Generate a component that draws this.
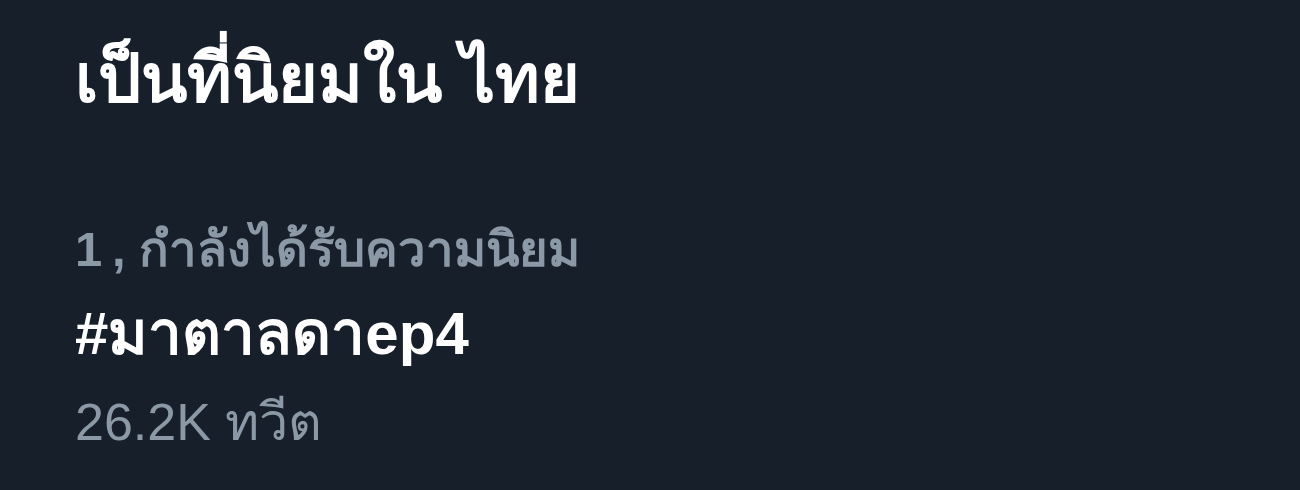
export default function App() {
  return (
    <div className="w-[1300px] h-[490px] bg-[#161f2a] font-['Liberation_Sans',sans-serif] px-[75px] pt-[38px]">
      <h2 className="text-[68px] leading-[80px] font-bold text-white">เป็นที่นิยมใน ไทย</h2>
      <div className="mt-[101px] text-[49px] leading-[60px] font-bold text-[#8b98a5]">1{'\u2009'}, กำลังได้รับความนิยม</div>
      <div className="mt-[23px] text-[60px] leading-[64px] font-bold text-white">#มาตาลดาep4</div>
      <div className="mt-[24px] text-[52px] leading-[64px] text-[#8b98a5]">26.2K ทวีต</div>
    </div>
  );
}
